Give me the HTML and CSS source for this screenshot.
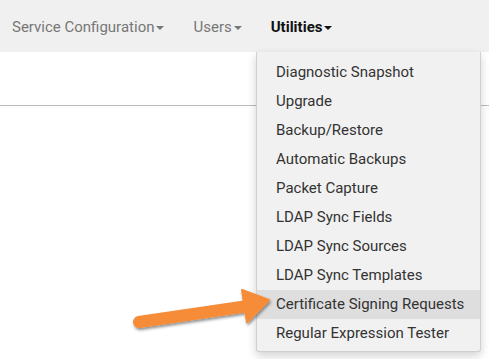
FILE: index.html
```html
<!DOCTYPE html>
<html>
<head>
<meta charset="utf-8">
<link rel="stylesheet" href="styles.css">
</head>
<body>
<nav class="navbar">
  <a class="nav-link">Service Configuration<span class="caret"></span></a>
  <a class="nav-link">Users<span class="caret"></span></a>
  <a class="nav-link active">Utilities<span class="caret"></span></a>
</nav>
<div class="content">
  <div class="toolbar"></div>
  <hr class="rule">
</div>
<ul class="dropdown">
  <li>Diagnostic Snapshot</li>
  <li>Upgrade</li>
  <li>Backup/Restore</li>
  <li>Automatic Backups</li>
  <li>Packet Capture</li>
  <li>LDAP Sync Fields</li>
  <li>LDAP Sync Sources</li>
  <li>LDAP Sync Templates</li>
  <li class="hl">Certificate Signing Requests</li>
  <li>Regular Expression Tester</li>
</ul>
<svg class="arrow" width="489" height="359" viewBox="0 0 489 359">
  <defs>
    <filter id="sh" x="-20%" y="-40%" width="140%" height="180%">
      <feDropShadow dx="1" dy="2" stdDeviation="1.5" flood-color="#000" flood-opacity="0.45"/>
    </filter>
  </defs>
  <g filter="url(#sh)" fill="#f68b37" stroke="#f68b37">
    <line x1="139" y1="322" x2="248" y2="306" stroke-width="12" stroke-linecap="round"/>
    <polygon points="242,290 269,300 247,322" stroke-width="2" stroke-linejoin="round"/>
  </g>
</svg>
</body>
</html>
```
FILE: styles.css
```css
html, body {
  margin: 0;
  padding: 0;
  background: #fff;
  font-family: Roboto, "Helvetica Neue", Arial, sans-serif;
  width: 489px;
  height: 359px;
  overflow: hidden;
  position: relative;
}
.navbar {
  height: 52px;
  background: #f0f0f0;
  display: flex;
  align-items: center;
  padding-left: 12px;
  gap: 29px;
  font-size: 15px;
}
.nav-link {
  color: #777;
  display: flex;
  align-items: center;
  padding-top: 1px;
}
.nav-link.active {
  color: #111;
  font-weight: bold;
}
.caret {
  display: inline-block;
  width: 0;
  height: 0;
  margin-left: 2px;
  margin-top: 2px;
  border-left: 4px solid transparent;
  border-right: 4px solid transparent;
  border-top: 4px solid currentColor;
}
.content .toolbar {
  height: 53px;
}
.rule {
  margin: 0;
  border: 0;
  border-top: 1px solid #bcbcbc;
}
.dropdown {
  position: absolute;
  left: 256px;
  top: 52px;
  width: 225px;
  margin: 0;
  padding: 6px 0 3px;
  list-style: none;
  background: #f1f1f1;
  border-left: 1px solid #d0d0d0;
  border-right: 1px solid #d0d0d0;
  border-bottom: 1px solid #d0d0d0;
  border-radius: 0 0 3px 3px;
  box-shadow: 0 4px 10px rgba(0,0,0,0.18);
  box-sizing: border-box;
  font-size: 15px;
  color: #333;
}
.dropdown li {
  padding: 4px 19px;
  line-height: 21px;
  white-space: nowrap;
}
.dropdown li.hl {
  background: #dedede;
}
.arrow {
  position: absolute;
  left: 0;
  top: 0;
  pointer-events: none;
}
```
